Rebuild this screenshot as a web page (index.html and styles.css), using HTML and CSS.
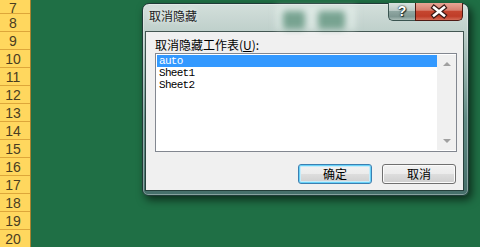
FILE: index.html
```html
<!DOCTYPE html>
<html>
<head>
<meta charset="utf-8">
<link rel="stylesheet" href="styles.css">
</head>
<body>
<div class="screen">
  <div class="rowhead">
    <div class="r first">7</div><div class="r">8</div><div class="r">9</div><div class="r">10</div>
    <div class="r">11</div><div class="r">12</div><div class="r">13</div><div class="r">14</div>
    <div class="r">15</div><div class="r">16</div><div class="r">17</div><div class="r">18</div>
    <div class="r">19</div><div class="r">20</div>
  </div>
  <div class="stage">
    <div class="dialog">
      <div class="titlebar">
        <div class="glass"><span class="g1"></span><span class="g2"></span></div>
        <span class="title">取消隐藏</span>
        <div class="caps">
          <div class="help">?</div>
          <div class="close">
            <svg width="46" height="17" viewBox="0 0 46 17">
              <path d="M18 4.5 L28 12.5 M28 4.5 L18 12.5" stroke="#3a1a16" stroke-width="5" stroke-linecap="square" fill="none"/>
              <path d="M18 4.5 L28 12.5 M28 4.5 L18 12.5" stroke="#ffffff" stroke-width="2.6" stroke-linecap="square" fill="none"/>
            </svg>
          </div>
        </div>
      </div>
      <div class="client">
        <div class="label">取消隐藏工作表(<u>U</u>):</div>
        <div class="listbox">
          <ul class="items">
            <li class="sel">auto</li>
            <li>Sheet1</li>
            <li>Sheet2</li>
          </ul>
          <div class="scroll">
            <span class="arr up"></span>
            <span class="arr down"></span>
          </div>
        </div>
        <div class="btns">
          <div class="btn focus">确定</div>
          <div class="btn">取消</div>
        </div>
      </div>
    </div>
  </div>
</div>
</body>
</html>
```
FILE: styles.css
```css
html, body {
  margin: 0;
  padding: 0;
}
body {
  width: 480px;
  height: 247px;
  overflow: hidden;
  background: #1f6f45;
}
.screen {
  display: flex;
  height: 247px;
  overflow: hidden;
}
.rowhead {
  flex: none;
  width: 30px;
  height: 247px;
  border-right: 1px solid #a9822e;
  background: #ffd75e;
  display: flex;
  flex-direction: column;
  overflow: hidden;
}
.r {
  flex: none;
  height: 18px;
  box-sizing: border-box;
  border-bottom: 1px solid #dda63a;
  text-align: center;
  padding-right: 4px;
  font: 14px/18px "Liberation Sans", sans-serif;
  color: #4a3d22;
}
.r.first {
  height: 14px;
  line-height: 14px;
  padding-top: 1px;
}
.stage {
  flex: 1;
  padding: 3px 0 0 111px;
}
.dialog {
  position: relative;
  width: 327px;
  height: 193px;
  box-sizing: border-box;
  border: 1px solid #1f3b37;
  border-radius: 7px 7px 6px 6px;
  padding: 0 5px 5px 3px;
  display: flex;
  flex-direction: column;
  background: linear-gradient(180deg, #d3dfdb 0%, #bfd0cb 14%, #93b0aa 35%, #5f8a84 60%, #466f6a 100%);
  box-shadow: 3px 4px 9px rgba(0, 0, 0, 0.6), inset 0 0 0 1px rgba(255, 255, 255, 0.35);
}
.titlebar {
  position: relative;
  height: 28px;
  flex: none;
  display: flex;
  justify-content: space-between;
  align-items: flex-start;
}
.glass {
  position: absolute;
  left: 130px;
  top: 2px;
  width: 80px;
  height: 24px;
  background: rgba(235, 245, 242, 0.5);
  filter: blur(3px);
}
.glass span {
  position: absolute;
  top: 5px;
  height: 18px;
  background: rgba(40, 110, 80, 0.55);
  border-radius: 3px;
}
.g1 { left: 7px; width: 22px; }
.g2 { left: 42px; width: 27px; }
.title {
  position: relative;
  padding: 4px 0 0 3px;
  font: 12px/16px "Noto Sans CJK SC", sans-serif;
  color: #1b1b1b;
  text-shadow: 0 0 5px rgba(255, 255, 255, 0.9);
}
.caps {
  position: relative;
  display: flex;
  margin-top: -1px;
  height: 18px;
}
.help {
  width: 26px;
  height: 17px;
  border: 1px solid #3a5450;
  border-top: none;
  border-right: none;
  border-radius: 0 0 0 5px;
  background: linear-gradient(180deg, #d9e3e0 0%, #b9c9c5 45%, #8ea6a1 50%, #7f9893 80%, #a9bdb8 100%);
  color: #fff;
  font: bold 14px/17px "Liberation Sans", sans-serif;
  text-align: center;
  text-shadow: 0 0 1px #1e2e2c, 0 0 2px #1e2e2c, 1px 1px 1px #1e2e2c;
}
.close {
  width: 46px;
  height: 17px;
  border: 1px solid #4e1a14;
  border-top: none;
  border-radius: 0 0 5px 0;
  background: linear-gradient(180deg, #e9a696 0%, #d8806f 42%, #c5452f 50%, #bf3d28 78%, #d46b55 100%);
}
.close svg {
  display: block;
}
.client {
  flex: 1;
  background: #f0f0f0;
  box-shadow: 0 0 0 1px rgba(25, 45, 42, 0.75);
  padding: 5px 6px 0 9px;
  display: flex;
  flex-direction: column;
}
.label {
  height: 16px;
  font: 12px/16px "Noto Sans CJK SC", sans-serif;
  color: #000;
}
.listbox {
  height: 99px;
  box-sizing: border-box;
  border: 1px solid #828790;
  background: #fff;
  padding: 1px 0 1px 1px;
  display: flex;
}
.items {
  flex: 1;
  list-style: none;
  margin: 0;
  padding: 0;
}
.items li {
  height: 12px;
  padding-left: 2px;
  font: 11px/12px "Liberation Mono", monospace;
  letter-spacing: -0.7px;
  color: #000;
}
.items li.sel {
  background: #3399ff;
  color: #fff;
}
.scroll {
  width: 19px;
  background: #f0f0f0;
  display: flex;
  flex-direction: column;
  justify-content: space-between;
  align-items: center;
  padding: 7px 0 7px;
}
.arr {
  width: 0;
  height: 0;
  border-left: 4px solid transparent;
  border-right: 4px solid transparent;
}
.up {
  border-bottom: 4px solid #a0a0a0;
}
.down {
  border-top: 4px solid #a0a0a0;
}
.btns {
  margin-top: 12px;
  margin-right: 1px;
  display: flex;
  justify-content: flex-end;
  gap: 10px;
}
.btn {
  width: 74px;
  height: 20px;
  box-sizing: border-box;
  border: 1px solid #707070;
  border-radius: 3px;
  background: linear-gradient(180deg, #f2f2f2 0%, #ebebeb 50%, #dddddd 50%, #cfcfcf 100%);
  box-shadow: inset 0 0 0 1px #fbfbfb;
  font: 12px/18px "Noto Sans CJK SC", sans-serif;
  color: #000;
  text-align: center;
}
.btn.focus {
  border-color: #3c7fb1;
  box-shadow: inset 0 0 0 1px #68d2f8, inset 0 0 0 2px #c6ecfa;
}
```
